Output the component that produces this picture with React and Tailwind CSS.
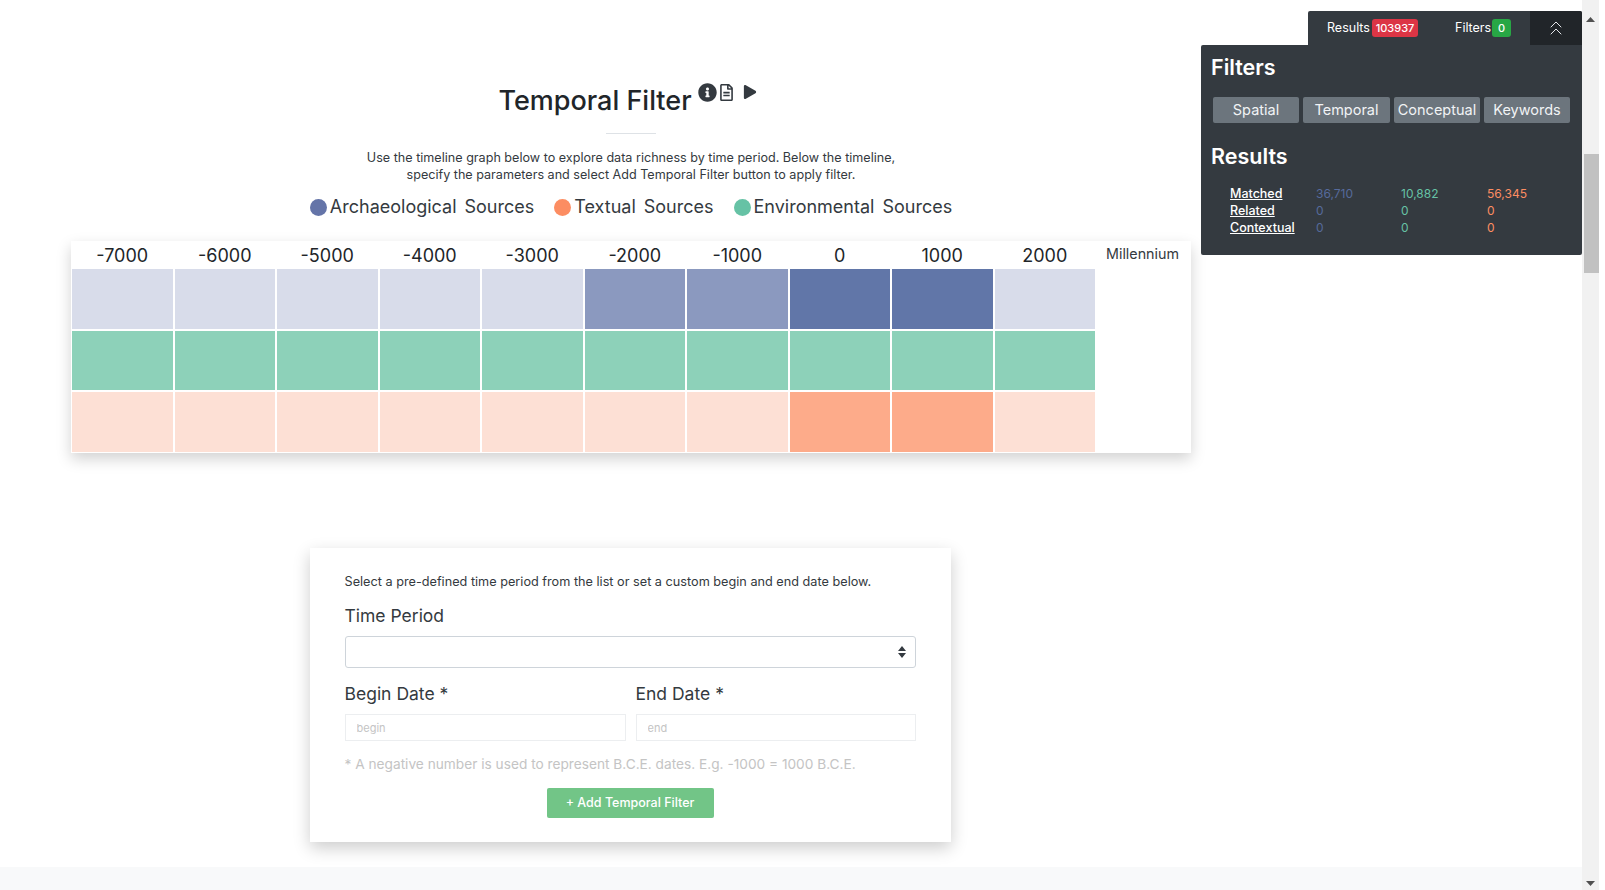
import React from 'react';
import { FaInfoCircle, FaRegFileAlt, FaPlay } from 'react-icons/fa';
import { ChevronsUp } from 'lucide-react';

const years = [-7000, -6000, -5000, -4000, -3000, -2000, -1000, 0, 1000, 2000];

// one row per source, colour per millennium
const L = 'bg-[#d8dcea]', M = 'bg-[#8b99bf]', D = 'bg-[#6176a8]';
const rows = [
    [L, L, L, L, L, M, M, D, D, L],
    Array(10).fill('bg-[#8dd1b9]'),
    ['bg-[#fde0d5]', 'bg-[#fde0d5]', 'bg-[#fde0d5]', 'bg-[#fde0d5]', 'bg-[#fde0d5]', 'bg-[#fde0d5]', 'bg-[#fde0d5]', 'bg-[#fdab8a]', 'bg-[#fdab8a]', 'bg-[#fde0d5]'],
];

const legend = [
    { dot: 'bg-[#6474a8]', name: 'Archaeological', gap: 'mr-[20px]' },
    { dot: 'bg-[#fc8d62]', name: 'Textual', gap: 'mr-[20px]' },
    { dot: 'bg-[#66c2a5]', name: 'Environmental', gap: '' },
];

const results = [
    ['Matched', '36,710', '10,882', '56,345'],
    ['Related', '0', '0', '0'],
    ['Contextual', '0', '0', '0'],
];

function FilterPanel() {
    return (
        <div className="absolute top-[11px] right-[23px] w-[381px] text-white">
            <div className="ml-auto flex h-[34px] w-[274px] rounded-t-[2px] bg-[#343a40] text-[12.5px]">
                <div className="flex flex-1 items-center pl-[19px]">
                    <span className="w-[45px]">Results</span>
                    <span className="flex h-[18px] w-[46px] items-center justify-center rounded-[3px] bg-[#dc3545] text-[11px] font-medium">103937</span>
                    <span className="ml-[37px] w-[37px]">Filters</span>
                    <span className="flex h-[18px] w-[19px] items-center justify-center rounded-[3px] bg-[#28a745] text-[11px] font-medium">0</span>
                </div>
                <div className="flex w-[52px] items-center justify-center rounded-tr-[2px] bg-[#212529]">
                    <ChevronsUp size={24} strokeWidth={1} color="#e5e7eb" />
                </div>
            </div>
            <div className="h-[210px] rounded-b-[2px] rounded-tl-[2px] bg-[#343a40] pl-[10px] pt-[7px]">
                <h3 className="text-[21.5px] font-semibold leading-[30px]">Filters</h3>
                <div className="mt-[15px] flex gap-[4px] pl-[2px] text-[14.5px] text-[#f1f3f5]">
                    <button className="h-[26px] w-[86px] rounded-[2px] bg-[#6c757d]">Spatial</button>
                    <button className="h-[26px] w-[87px] rounded-[2px] bg-[#6c757d]">Temporal</button>
                    <button className="h-[26px] w-[86px] rounded-[2px] bg-[#6c757d]">Conceptual</button>
                    <button className="h-[26px] w-[86px] rounded-[2px] bg-[#6c757d]">Keywords</button>
                </div>
                <h3 className="mt-[18px] text-[21.5px] font-semibold leading-[30px]">Results</h3>
                <div className="mt-[14px] pl-[19px] text-[12px] leading-[17px]">
                    {results.map(r => (
                        <div key={r[0]} className="flex">
                            <span className="w-[86px] text-[12.5px] font-medium underline">{r[0]}</span>
                            <span className="w-[85px] text-[#566a9c]">{r[1]}</span>
                            <span className="w-[86px] text-[#66c2a5]">{r[2]}</span>
                            <span className="text-[#fc8d62]">{r[3]}</span>
                        </div>
                    ))}
                </div>
            </div>
        </div>
    );
}

function Timeline() {
    return (
        <div className="mt-[21px] flex h-[212px] w-[1120px] bg-white shadow-[0_6px_14px_rgba(0,0,0,0.18)]">
            <div className="ml-px w-[1023px]">
                <div className="grid h-[28px] grid-cols-10 gap-[2px] text-center text-[18px] leading-[29px] text-[#212529]">
                    {years.map(y => <span key={y}>{y}</span>)}
                </div>
                <div className="grid grid-cols-10 gap-[2px]">
                    {rows.map((row, i) => row.map((color, j) => (
                        <div key={`${i}-${j}`} className={`h-[59.5px] ${color}`}></div>
                    )))}
                </div>
            </div>
            <span className="ml-[11px] pt-[3px] text-[14.3px] leading-[20px] text-[#343a40]">Millennium</span>
        </div>
    );
}

function TemporalForm() {
    return (
        <div className="mt-[95px] mr-[2px] h-[294px] w-[641px] bg-white px-[35px] pt-[24px] shadow-[0_6px_16px_rgba(0,0,0,0.2)]">
            <p className="text-[12.7px] leading-[20px] text-[#343a40]">Select a pre-defined time period from the list or set a custom begin and end date below.</p>
            <label className="mt-[12px] block text-[17.5px] leading-[24px] text-[#343a40]">Time Period</label>
            <div className="relative mt-[8px]">
                <select className="block h-[32px] w-full appearance-none rounded-[3px] border border-[#ced4da] bg-white"></select>
                <svg className="absolute right-[10px] top-[10px]" width="8" height="12" viewBox="0 0 8 12">
                    <path d="M4 0 L8 5 H0 Z M0 7 H8 L4 12 Z" fill="#343a40" />
                </svg>
            </div>
            <div className="mt-[14px] flex gap-[10px]">
                <div className="w-[281px]">
                    <label className="block text-[17.5px] leading-[24px] text-[#343a40]">Begin Date *</label>
                    <input placeholder="begin" className="mt-[8px] block h-[27px] w-full border border-[#eceef0] px-[11px] text-[11px] placeholder:text-[#c4c4c4]" />
                </div>
                <div className="w-[280px]">
                    <label className="block text-[17.5px] leading-[24px] text-[#343a40]">End Date *</label>
                    <input placeholder="end" className="mt-[8px] block h-[27px] w-full border border-[#eceef0] px-[11px] text-[11px] placeholder:text-[#c4c4c4]" />
                </div>
            </div>
            <p className="mt-[13px] text-[13.7px] leading-[20px] text-[#c4c4c4]">* A negative number is used to represent B.C.E. dates. E.g. -1000 = 1000 B.C.E.</p>
            <div className="mt-[14px] flex justify-center">
                <button className="h-[30px] w-[167px] rounded-[2px] bg-[#72c587] text-[12.5px] font-medium text-white">+ Add Temporal Filter</button>
            </div>
        </div>
    );
}

export default function App() {
    return (
        <div className="relative flex h-screen overflow-hidden bg-white pr-[6px] font-['Inter','Liberation_Sans',sans-serif]">
            <div className="flex flex-1 flex-col">
                <div className="flex w-[1262px] flex-1 flex-col items-center pt-[80px]">
                    <div className="flex h-[40px] items-start pr-[7px]">
                        <h2 className="text-[27px] font-medium leading-[42px] text-[#212529]">Temporal Filter</h2>
                        <FaInfoCircle size={19} className="ml-[6px] mt-[3px] text-[#343a40]" />
                        <FaRegFileAlt size={17} className="ml-[1px] mt-[4px] text-[#343a40]" />
                        <FaPlay size={14} className="ml-[8px] mt-[5px] text-[#343a40]" />
                    </div>
                    <div className="mt-[13px] h-px w-[50px] bg-[#dee2e6]"></div>
                    <p className="mt-[15px] text-center text-[12.6px] leading-[17px] text-[#343a40]">
                        Use the timeline graph below to explore data richness by time period. Below the timeline,<br />
                        specify the parameters and select Add Temporal Filter button to apply filter.
                    </p>
                    <div className="mt-[11px] flex items-center text-[18px] leading-[26px] text-[#343a40]">
                        {legend.map(s => (
                            <div key={s.name} className={`flex items-center ${s.gap}`}>
                                <span className={`mr-[3px] h-[17px] w-[17px] rounded-full ${s.dot}`}></span>
                                <span className="mr-[8px]">{s.name}</span>
                                <span>Sources</span>
                            </div>
                        ))}
                    </div>
                    <Timeline />
                    <TemporalForm />
                </div>
                <div className="h-[23px] bg-[#f8f9fa]"></div>
            </div>

            {/* scrollbar */}
            <div className="flex w-[17px] flex-col items-center bg-[#f1f1f1]">
                <svg className="mt-[17px]" width="9" height="5" viewBox="0 0 9 5"><path d="M4.5 0 L9 5 H0 Z" fill="#505050" /></svg>
                <div className="ml-[2px] mt-[132px] h-[119px] w-[15px] bg-[#c1c1c1]"></div>
                <svg className="mt-auto mb-[4px]" width="9" height="5" viewBox="0 0 9 5"><path d="M0 0 H9 L4.5 5 Z" fill="#505050" /></svg>
            </div>

            <FilterPanel />
        </div>
    );
}
